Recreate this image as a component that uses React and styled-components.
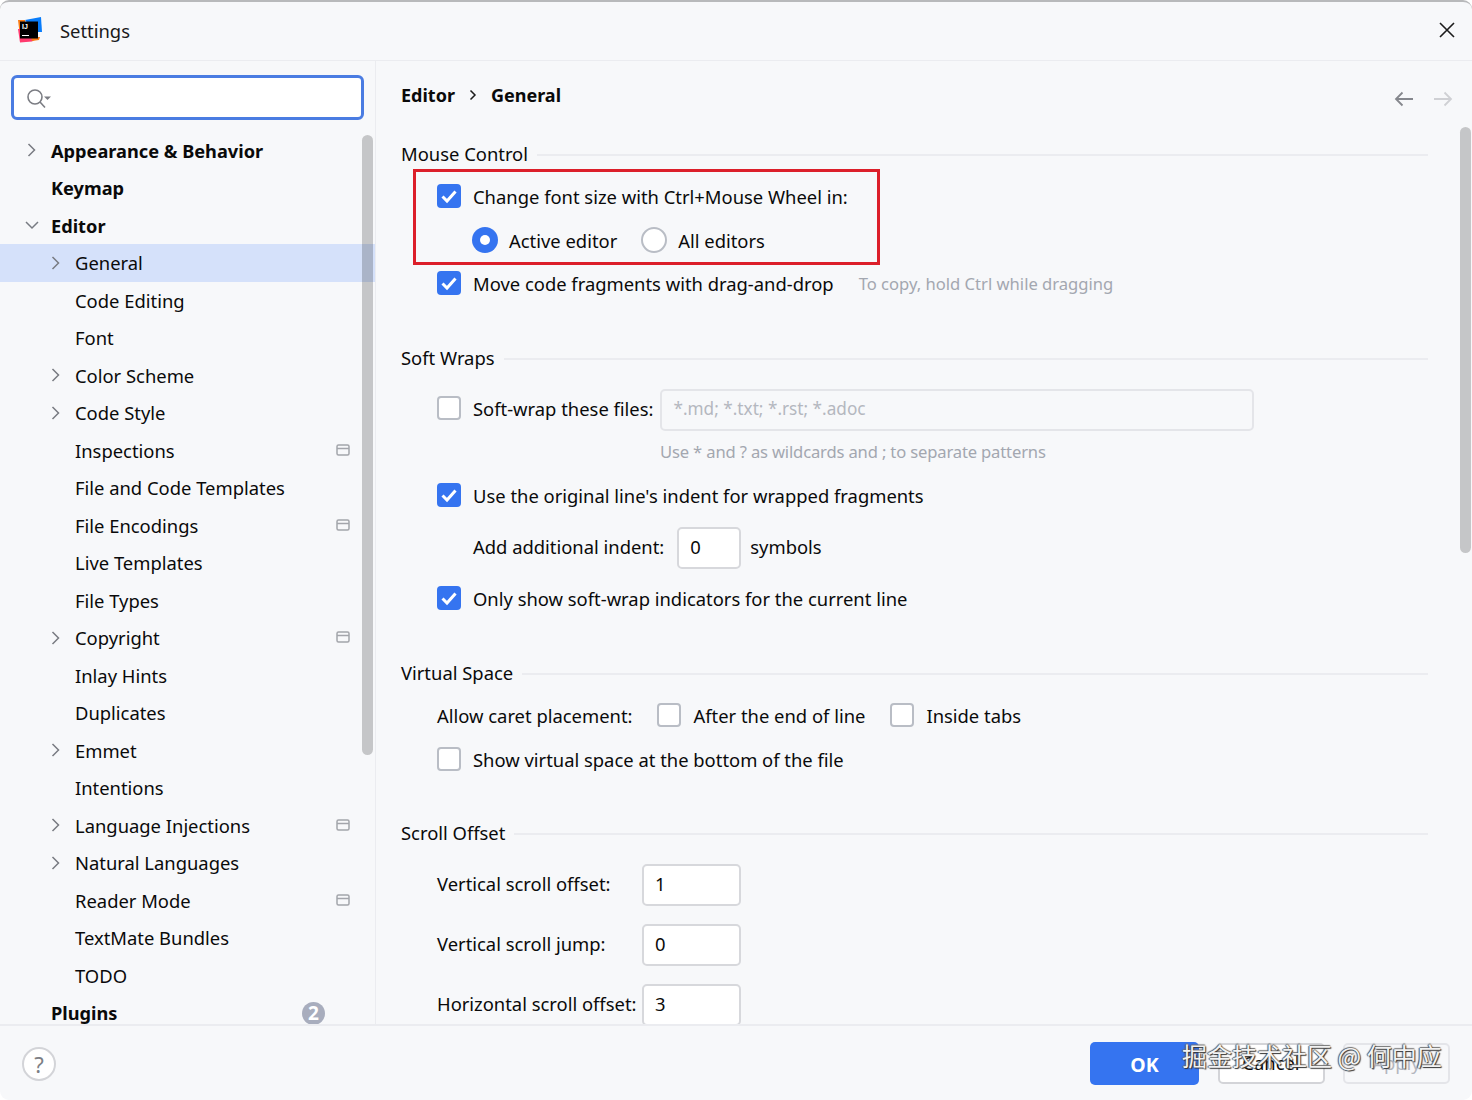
import React from 'react';
import styled, { createGlobalStyle } from 'styled-components';

const GlobalStyle = createGlobalStyle`
  html, body { margin: 0; padding: 0; background: #fff; }
  * { box-sizing: border-box; }
  body { font-family: "Noto Sans", "Noto Sans CJK SC", sans-serif; color: #0a0a0a; }
`;

const Window = styled.div`
  position: relative;
  width: 1472px;
  height: 1100px;
  display: flex;
  flex-direction: column;
  overflow: hidden;
  background: #f7f8fa;
  border-top: 2px solid #b8b9bb;
  border-radius: 9px;
  font-size: 18.4px;
`;

const TitleBar = styled.div`
  flex: 0 0 59px;
  display: flex;
  align-items: center;
  padding: 0 17px 2px 17px;
  border-bottom: 1px solid #ebecf0;
`;

const TitleText = styled.div`
  margin-left: 17px;
  color: #1a1a1a;
`;

const CloseButton = styled.div`
  margin-left: auto;
  display: flex;
`;

const Body = styled.div`
  flex: 1;
  min-height: 0;
  display: flex;
`;

const Sidebar = styled.aside`
  position: relative;
  flex: 0 0 376px;
  overflow: hidden;
  border-right: 1px solid #ebecf0;
  padding-top: 14px;
`;

const SearchBox = styled.div`
  margin-left: 11px;
  width: 353px;
  height: 45px;
  background: #fff;
  border: 3px solid #4a7ce2;
  border-radius: 6px;
  display: flex;
  align-items: center;
  padding-left: 13px;
`;

const Tree = styled.div`
  margin-top: 11.5px;
  display: grid;
  grid-auto-rows: 37.5px;
`;

const TreeRow = styled.div`
  position: relative;
  display: flex;
  align-items: center;
  padding-left: ${(p) => (p.$depth ? 75 : 51)}px;
  padding-top: ${(p) => (p.$depth ? 0 : 1)}px;
  font-weight: ${(p) => (p.$depth ? 400 : 700)};
  font-size: ${(p) => (p.$depth ? 18.4 : 18.2)}px;
  background: ${(p) => (p.$selected ? '#d5e1fa' : 'transparent')};
`;

const Chevron = styled.span`
  position: absolute;
  left: ${(p) => (p.$depth ? 47 : 23)}px;
  top: 50%;
  margin-top: -10px;
  display: flex;
`;

const ScopeIcon = styled.span`
  position: absolute;
  left: 336px;
  top: 50%;
  margin-top: -7.5px;
  display: flex;
`;

const CountBadge = styled.span`
  position: absolute;
  left: 302px;
  top: 50%;
  margin-top: -11px;
  width: 23px;
  height: 23px;
  border-radius: 50%;
  background: #a8adbd;
  color: #fff;
  font-size: 19px;
  display: flex;
  align-items: center;
  justify-content: center;
`;

const Thumb = styled.div`
  position: absolute;
  top: ${(p) => p.$top}px;
  left: ${(p) => p.$left}px;
  width: 11px;
  height: ${(p) => p.$height}px;
  border-radius: 6px;
  background: rgba(0, 0, 0, 0.2);
`;

const Main = styled.main`
  position: relative;
  flex: 1;
  min-width: 0;
  overflow: hidden;
  padding: 0 44px 0 25px;
`;

const Breadcrumb = styled.div`
  height: 68px;
  display: flex;
  align-items: center;
  font-weight: 700;
  font-size: 18px;
  gap: 14px;
`;

const NavArrows = styled.div`
  position: absolute;
  top: 30px;
  right: 19px;
  display: flex;
  gap: 19px;
`;

const SectionTitle = styled.div`
  display: flex;
  align-items: center;
  gap: 9px;
  height: 30px;
  margin-top: ${(p) => p.$top || 0}px;
  &::after {
    content: '';
    flex: 1;
    height: 2px;
    margin-top: 4px;
    background: #ebecf0;
  }
`;

const Row = styled.div`
  display: flex;
  align-items: center;
  height: ${(p) => p.$height || 30}px;
  margin-top: ${(p) => p.$top || 0}px;
  padding-left: ${(p) => p.$indent ?? 36}px;
  gap: ${(p) => p.$gap ?? 12}px;
`;

const CheckBox = styled.span`
  flex: none;
  width: 24px;
  height: 24px;
  border-radius: 4px;
  display: flex;
  align-items: center;
  justify-content: center;
  background: ${(p) => (p.$checked ? '#3574f0' : '#fff')};
  border: ${(p) => (p.$checked ? 'none' : '2px solid #b9bdc5')};
`;

const Radio = styled.span`
  flex: none;
  width: 26px;
  height: 26px;
  border-radius: 50%;
  display: flex;
  align-items: center;
  justify-content: center;
  background: ${(p) => (p.$checked ? '#3574f0' : '#fff')};
  border: ${(p) => (p.$checked ? 'none' : '2px solid #b9bdc5')};
  &::after {
    content: '';
    display: ${(p) => (p.$checked ? 'block' : 'none')};
    width: 10px;
    height: 10px;
    border-radius: 50%;
    background: #fff;
  }
`;

const Label = styled.span`
  white-space: nowrap;
  margin-right: ${(p) => p.$after || 0}px;
`;

const Hint = styled.span`
  color: #a3a7b0;
  font-size: 16.6px;
  letter-spacing: ${(p) => (p.$tight ? -0.16 : 0)}px;
  white-space: nowrap;
`;

const FieldBox = styled.div`
  flex: none;
  width: ${(p) => p.$width}px;
  height: 42px;
  margin-top: 3px;
  display: flex;
  align-items: center;
  padding: 0 0 3px 11px;
  border: 2px solid ${(p) => (p.$disabled ? '#e4e5e9' : '#d7d8dc')};
  border-radius: 5px;
  background: ${(p) => (p.$disabled ? '#f7f8fa' : '#fff')};
  color: ${(p) => (p.$disabled ? '#b4b7bf' : '#0a0a0a')};
  font-size: ${(p) => (p.$disabled ? 17.2 : 18.4)}px;
`;

const OffsetLabel = styled.span`
  flex: 0 0 205px;
  min-width: 0;
  white-space: nowrap;
`;

const RedFrame = styled.div`
  position: absolute;
  left: 37px;
  top: 108px;
  width: 467px;
  height: 96px;
  border: 3px solid #dc1f2a;
  pointer-events: none;
`;

const Footer = styled.footer`
  flex: 0 0 76px;
  display: flex;
  align-items: center;
  padding: 1px 22px 0;
  border-top: 2px solid #ebecf0;
`;

const HelpButton = styled.div`
  width: 34px;
  height: 34px;
  border-radius: 50%;
  background: #fff;
  border: 2px solid #d3d4d8;
  color: #7d7f85;
  display: flex;
  align-items: center;
  justify-content: center;
  font-size: 22px;
`;

const Buttons = styled.div`
  margin-left: auto;
  display: flex;
  align-items: center;
  gap: 18.5px;
`;

const Button = styled.div`
  width: ${(p) => p.$width || 107}px;
  height: ${(p) => (p.$primary ? 43 : 41)}px;
  border-radius: 5px;
  display: flex;
  align-items: flex-end;
  justify-content: center;
  padding-bottom: 7px;
  background: ${(p) => (p.$primary ? '#3574f0' : p.$disabled ? '#f7f8fa' : '#fff')};
  color: ${(p) => (p.$primary ? '#fff' : p.$disabled ? '#b4b7bf' : '#0a0a0a')};
  font-weight: ${(p) => (p.$primary ? 700 : 400)};
  font-size: ${(p) => (p.$primary ? 19.5 : 18.4)}px;
  border: ${(p) => (p.$primary ? 'none' : `2px solid ${p.$disabled ? '#e4e5e9' : '#d3d4d8'}`)};
`;

const Watermark = styled.div`
  position: absolute;
  left: 1182px;
  top: 1036px;
  font-family: "Noto Sans CJK SC", sans-serif;
  font-size: 25px;
  line-height: 34px;
  white-space: nowrap;
  color: #f2f2f2;
  text-shadow: 1px 1px 1px #333, -1px 0 1px #555, 0 -1px 1px #777;
`;

const ChevronRight = () => (
  <svg width="20" height="20" viewBox="0 0 20 20" fill="none" stroke="#787b82" strokeWidth="1.5">
    <path d="M5.5 4 11.5 10 5.5 16" />
  </svg>
);

const ChevronDown = () => (
  <svg width="20" height="20" viewBox="0 0 20 20" fill="none" stroke="#787b82" strokeWidth="1.5">
    <path d="M3 7 9 13 15 7" />
  </svg>
);

const Scope = () => (
  <svg width="14" height="14" viewBox="0 0 14 14" fill="none" stroke="#a3a5ab" strokeWidth="1.5">
    <rect x="1" y="2" width="12" height="10" rx="1.5" />
    <path d="M1 5.5h12" />
  </svg>
);

const Check = () => (
  <svg width="18" height="18" viewBox="0 0 18 18" fill="none" stroke="#fff" strokeWidth="3">
    <path d="M2.5 9.5 7 14 15.5 4.5" />
  </svg>
);

const SearchIcon = () => (
  <svg width="25" height="24" viewBox="0 0 25 24" fill="none">
    <circle cx="8" cy="11" r="7" stroke="#7b7d83" strokeWidth="1.6" />
    <path d="M13 16 18 21.5" stroke="#7b7d83" strokeWidth="1.6" />
    <path d="M17 10.5h7l-3.5 3.5z" fill="#7b7d83" />
  </svg>
);

const Logo = () => (
  <svg width="26" height="26" viewBox="0 0 26 26">
    <path d="M1 3h7v16H3z" fill="#f97a12" />
    <path d="M8 3 24 0 25 15 18 15z" fill="#087cfa" />
    <path d="M1 12 3 25.5 15 24.5 20 21.5 3 12z" fill="#ff3a6e" />
    <path d="M14 20h9l-1 3-7 1z" fill="#f97a12" />
    <rect x="3" y="4.5" width="18" height="17" fill="#000" />
    <text x="5" y="12" fontSize="7" fontWeight="700" fill="#fff" fontFamily="Liberation Sans, sans-serif">IJ</text>
    <path d="M5 18.5h7" stroke="#fff" strokeWidth="1.2" />
  </svg>
);

const Close = () => (
  <svg width="16" height="16" viewBox="0 0 16 16" fill="none" stroke="#1c1c1c" strokeWidth="1.6">
    <path d="M1 1 15 15M15 1 1 15" />
  </svg>
);

const Arrow = ({ color, flip }) => (
  <svg width="20" height="16" viewBox="0 0 20 16" fill="none" stroke={color} strokeWidth="1.8">
    <path d={flip ? 'M1 8h17M11.5 1.5 18 8l-6.5 6.5' : 'M19 8H2M8.5 1.5 2 8l6.5 6.5'} />
  </svg>
);

const treeItems = [
  { label: 'Appearance & Behavior', arrow: 'right' },
  { label: 'Keymap' },
  { label: 'Editor', arrow: 'down' },
  { label: 'General', depth: 1, arrow: 'right', selected: true },
  { label: 'Code Editing', depth: 1 },
  { label: 'Font', depth: 1 },
  { label: 'Color Scheme', depth: 1, arrow: 'right' },
  { label: 'Code Style', depth: 1, arrow: 'right' },
  { label: 'Inspections', depth: 1, scope: true },
  { label: 'File and Code Templates', depth: 1 },
  { label: 'File Encodings', depth: 1, scope: true },
  { label: 'Live Templates', depth: 1 },
  { label: 'File Types', depth: 1 },
  { label: 'Copyright', depth: 1, arrow: 'right', scope: true },
  { label: 'Inlay Hints', depth: 1 },
  { label: 'Duplicates', depth: 1 },
  { label: 'Emmet', depth: 1, arrow: 'right' },
  { label: 'Intentions', depth: 1 },
  { label: 'Language Injections', depth: 1, arrow: 'right', scope: true },
  { label: 'Natural Languages', depth: 1, arrow: 'right' },
  { label: 'Reader Mode', depth: 1, scope: true },
  { label: 'TextMate Bundles', depth: 1 },
  { label: 'TODO', depth: 1 },
  { label: 'Plugins', badge: 2 },
];

const Box = ({ checked }) => <CheckBox $checked={checked}>{checked && <Check />}</CheckBox>;

export default function App() {
  return (
    <>
      <GlobalStyle />
      <Window>
        <TitleBar>
          <Logo />
          <TitleText>Settings</TitleText>
          <CloseButton><Close /></CloseButton>
        </TitleBar>
        <Body>
          <Sidebar>
            <SearchBox><SearchIcon /></SearchBox>
            <Tree>
              {treeItems.map((item) => (
                <TreeRow key={item.label} $depth={item.depth} $selected={item.selected}>
                  {item.arrow && (
                    <Chevron $depth={item.depth}>
                      {item.arrow === 'down' ? <ChevronDown /> : <ChevronRight />}
                    </Chevron>
                  )}
                  {item.label}
                  {item.scope && <ScopeIcon><Scope /></ScopeIcon>}
                  {item.badge && <CountBadge>{item.badge}</CountBadge>}
                </TreeRow>
              ))}
            </Tree>
            <Thumb $top={74} $left={362} $height={620} />
          </Sidebar>
          <Main>
            <Breadcrumb>
              <span>Editor</span>
              <svg width="8" height="12" viewBox="0 0 8 12" fill="none" stroke="#1c1c1c" strokeWidth="1.5">
                <path d="M1.5 1.5 6 6l-4.5 4.5" />
              </svg>
              <span>General</span>
            </Breadcrumb>
            <NavArrows>
              <Arrow color="#85878d" />
              <Arrow color="#cfd0d4" flip />
            </NavArrows>

            <SectionTitle $top={9}>Mouse Control</SectionTitle>
            <Row $top={13}><Box checked /><Label>Change font size with Ctrl+Mouse Wheel in:</Label></Row>
            <Row $top={14} $indent={71} $gap={11}>
              <Radio $checked /><Label $after={13}>Active editor</Label>
              <Radio /><Label>All editors</Label>
            </Row>
            <Row $top={13}>
              <Box checked /><Label $after={13}>Move code fragments with drag-and-drop</Label>
              <Hint>To copy, hold Ctrl while dragging</Hint>
            </Row>

            <SectionTitle $top={44}>Soft Wraps</SectionTitle>
            <Row $top={15} $height={42}>
              <Box /><Label $after={-5}>Soft-wrap these files:</Label>
              <FieldBox $width={594} $disabled>*.md; *.txt; *.rst; *.adoc</FieldBox>
            </Row>
            <Row $top={7} $indent={259}><Hint $tight>Use * and ? as wildcards and ; to separate patterns</Hint></Row>
            <Row $top={14}><Box checked /><Label>Use the original line's indent for wrapped fragments</Label></Row>
            <Row $top={15} $height={42} $indent={72} $gap={9}>
              <Label $after={4}>Add additional indent:</Label>
              <FieldBox $width={64}>0</FieldBox>
              <Label>symbols</Label>
            </Row>
            <Row $top={16}><Box checked /><Label>Only show soft-wrap indicators for the current line</Label></Row>

            <SectionTitle $top={44}>Virtual Space</SectionTitle>
            <Row $top={13}>
              <Label $after={13}>Allow caret placement:</Label>
              <Box /><Label $after={13}>After the end of line</Label>
              <Box /><Label>Inside tabs</Label>
            </Row>
            <Row $top={14}><Box /><Label>Show virtual space at the bottom of the file</Label></Row>

            <SectionTitle $top={43}>Scroll Offset</SectionTitle>
            <Row $top={15} $height={42} $gap={0}>
              <OffsetLabel>Vertical scroll offset:</OffsetLabel><FieldBox $width={99}>1</FieldBox>
            </Row>
            <Row $top={18} $height={42} $gap={0}>
              <OffsetLabel>Vertical scroll jump:</OffsetLabel><FieldBox $width={99}>0</FieldBox>
            </Row>
            <Row $top={18} $height={42} $gap={0}>
              <OffsetLabel>Horizontal scroll offset:</OffsetLabel><FieldBox $width={99}>3</FieldBox>
            </Row>

            <RedFrame />
            <Thumb $top={66} $left={1084} $height={426} />
          </Main>
        </Body>
        <Footer>
          <HelpButton>?</HelpButton>
          <Buttons>
            <Button $primary $width={109}>OK</Button>
            <Button>Cancel</Button>
            <Button $disabled>Apply</Button>
          </Buttons>
        </Footer>
        <Watermark>掘金技术社区 @ 何中应</Watermark>
      </Window>
    </>
  );
}
